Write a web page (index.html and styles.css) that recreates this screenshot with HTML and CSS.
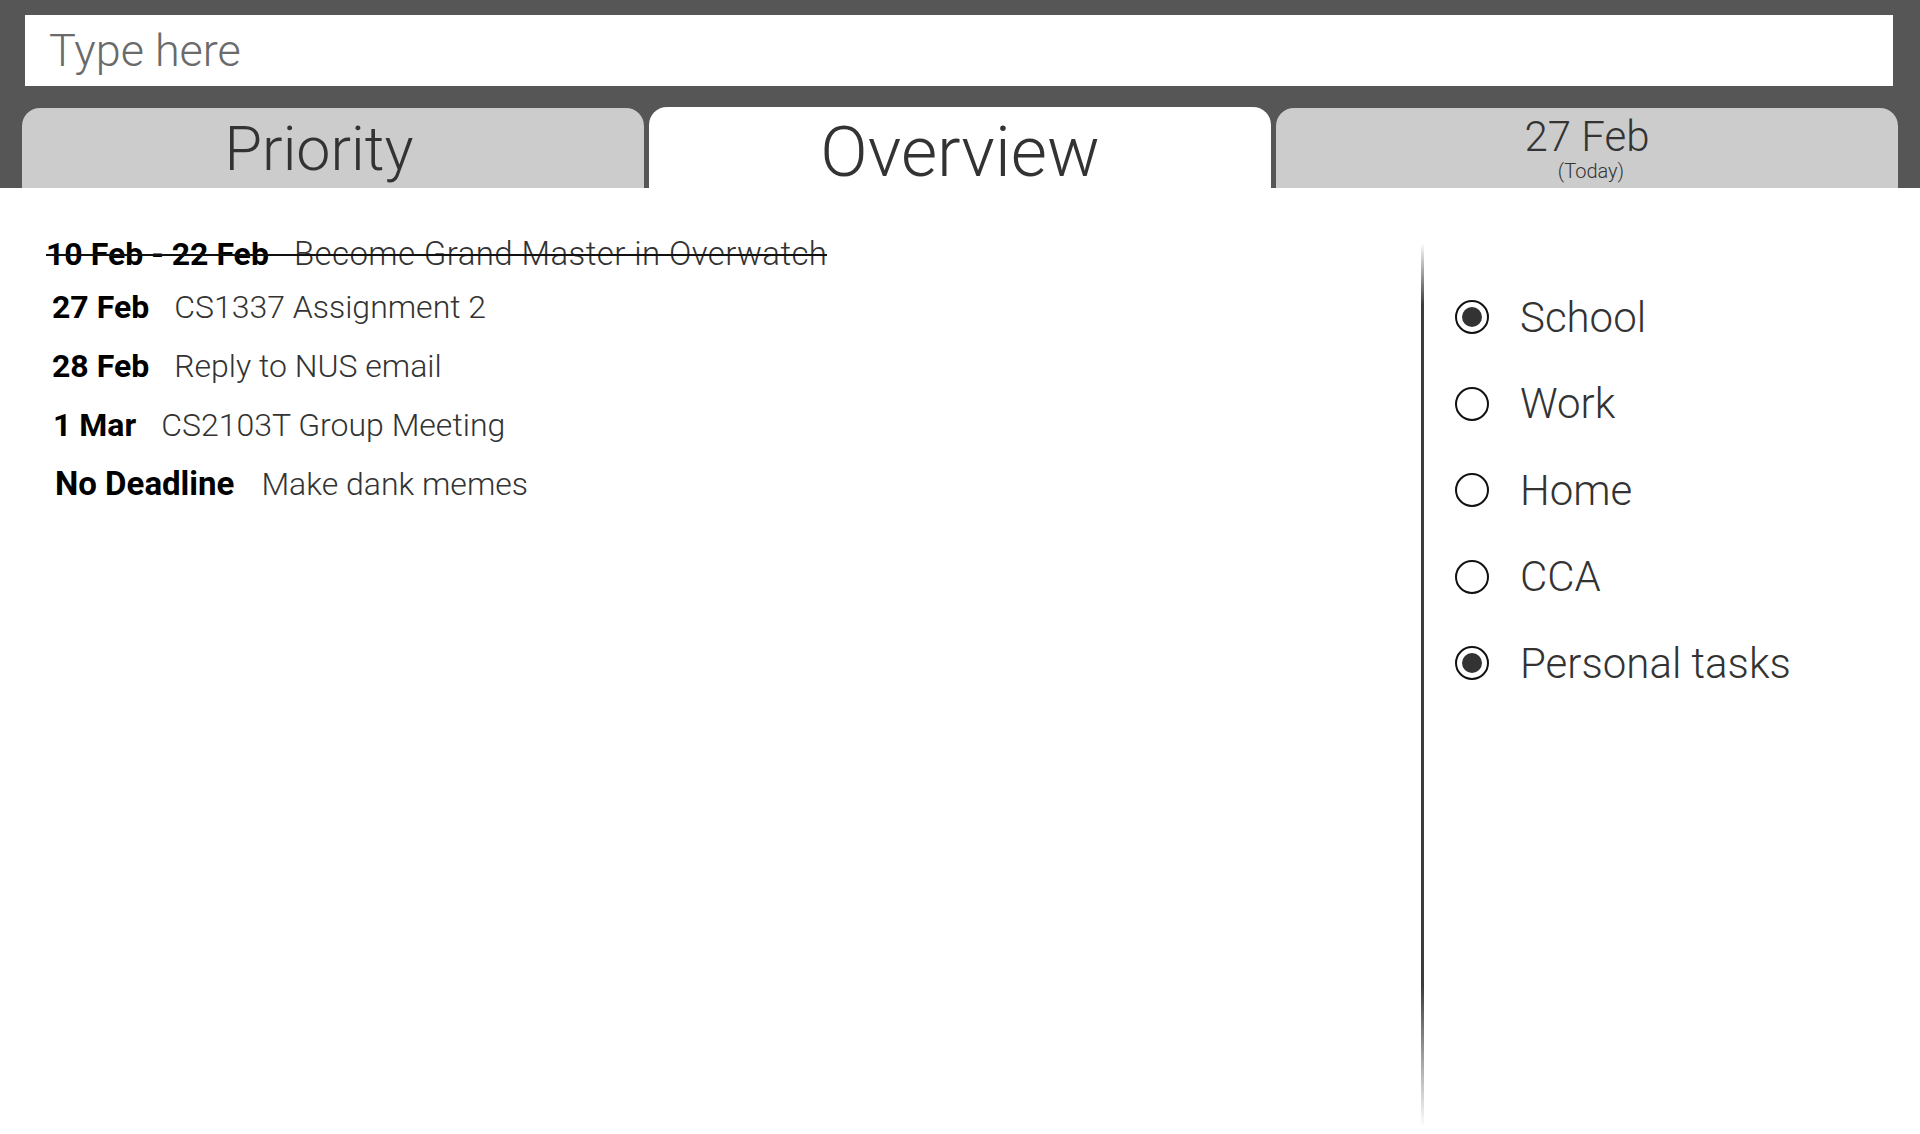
FILE: index.html
```html
<!DOCTYPE html>
<html>
<head>
<meta charset="utf-8">
<title>Tasks</title>
<link rel="stylesheet" href="styles.css">
</head>
<body>
<header class="header">
  <div class="search"><input class="search-input" type="text" placeholder="Type here"></div>
  <nav class="tabs">
    <div class="tab tab-priority"><span class="tab-label">Priority</span></div>
    <div class="tab tab-active"><span class="tab-label tab-label-lg">Overview</span></div>
    <div class="tab tab-date">
      <span class="tab-date-main">27 Feb</span>
      <span class="tab-date-sub">(Today)</span>
    </div>
  </nav>
</header>
<main class="content">
  <section class="list">
    <div class="row row-done">
      <span class="date">10 Feb - 22 Feb</span>
      <span class="task">Become Grand Master in Overwatch</span>
    </div>
    <div class="row">
      <span class="date">27 Feb</span>
      <span class="task">CS1337 Assignment 2</span>
    </div>
    <div class="row">
      <span class="date">28 Feb</span>
      <span class="task">Reply to NUS email</span>
    </div>
    <div class="row row-mar">
      <span class="date">1 Mar</span>
      <span class="task">CS2103T Group Meeting</span>
    </div>
    <div class="row row-nodl">
      <span class="date">No Deadline</span>
      <span class="task">Make dank memes</span>
    </div>
  </section>
  <div class="divider"></div>
  <aside class="filters">
    <div class="filter"><span class="radio radio-on"></span><span class="filter-label">School</span></div>
    <div class="filter"><span class="radio"></span><span class="filter-label">Work</span></div>
    <div class="filter"><span class="radio"></span><span class="filter-label">Home</span></div>
    <div class="filter"><span class="radio"></span><span class="filter-label">CCA</span></div>
    <div class="filter"><span class="radio radio-on"></span><span class="filter-label">Personal tasks</span></div>
  </aside>
</main>
</body>
</html>
```
FILE: styles.css
```css
* { box-sizing: border-box; }
html, body { margin: 0; padding: 0; }
body {
  width: 1920px;
  height: 1134px;
  overflow: hidden;
  background: #fff;
  font-family: Roboto, "Liberation Sans", sans-serif;
  font-weight: 300;
  color: #333;
}

.header {
  background: #565656;
  height: 188px;
  padding-top: 15px;
  display: flex;
  flex-direction: column;
}
.search {
  padding: 0 27px 0 25px;
}
.search-input {
  display: block;
  width: 100%;
  height: 71px;
  border: 0;
  outline: 0;
  margin: 0;
  background: #fff;
  padding: 0 0 0 24px;
  font-family: Roboto, "Liberation Sans", sans-serif;
  font-weight: 300;
  font-size: 45px;
  color: #333;
}
.search-input::placeholder { color: #6a6a6a; opacity: 1; }

.tabs {
  display: flex;
  gap: 5px;
  padding: 0 22px;
  margin-top: 22px;
  flex: 1;
}
.tab {
  flex: 1 1 0;
  min-width: 0;
  background: #cccccc;
  border-radius: 18px 18px 0 0;
  display: flex;
  align-items: center;
  justify-content: center;
  color: #333;
}
.tab-active { background: #fff; margin-top: -1px; }
.tab-label { font-size: 61px; line-height: 1; padding-top: 2px; }
.tab-priority .tab-label { margin-right: 28px; }
.tab-label-lg { font-size: 70px; padding-top: 8px; }
.tab-date {
  flex-direction: column;
}
.tab-date-main { font-size: 42px; line-height: 46px; }
.tab-date-sub { font-size: 20px; line-height: 22px; margin-left: 8px; }

.content {
  display: flex;
  height: 946px;
}
.list {
  width: 1421px;
  padding: 42px 0 0 52px;
}
.row {
  display: flex;
  align-items: center;
  height: 59px;
}
.row-done {
  height: 47px;
  width: fit-content;
  position: relative;
  margin-left: -6px;
}
.row-done::after {
  content: "";
  position: absolute;
  left: 0;
  right: 0;
  top: 24px;
  height: 2px;
  background: #111;
}
.row-mar { margin-left: 1px; }
.row-nodl { margin-left: 3px; }
.date {
  font-weight: 700;
  color: #000;
  margin-right: 25px;
  font-size: 32px;
}
.row-done .date { margin-right: 25px; }
.row-nodl .date { font-size: 33px; margin-right: 27px; }
.task {
  color: #333;
  font-size: 32px;
}
.row-done .task { font-size: 33px; letter-spacing: 0.4px; }

.divider {
  width: 3px;
  margin-top: 55px;
  height: 884px;
  background: linear-gradient(to bottom, rgba(60,60,60,0) 0%, #3c3c3c 7%, #3c3c3c 84%, rgba(60,60,60,0) 100%);
}

.filters {
  flex: 1;
  padding: 86px 0 0 31px;
}
.filter {
  display: flex;
  align-items: center;
  height: 86.5px;
}
.radio {
  width: 34px;
  height: 34px;
  border: 2px solid #111;
  border-radius: 50%;
  display: flex;
  align-items: center;
  justify-content: center;
  margin-right: 31px;
  flex: none;
}
.radio-on::before {
  content: "";
  width: 20px;
  height: 20px;
  border-radius: 50%;
  background: #333;
}
.filter-label {
  font-size: 42px;
  color: #333;
}
```
